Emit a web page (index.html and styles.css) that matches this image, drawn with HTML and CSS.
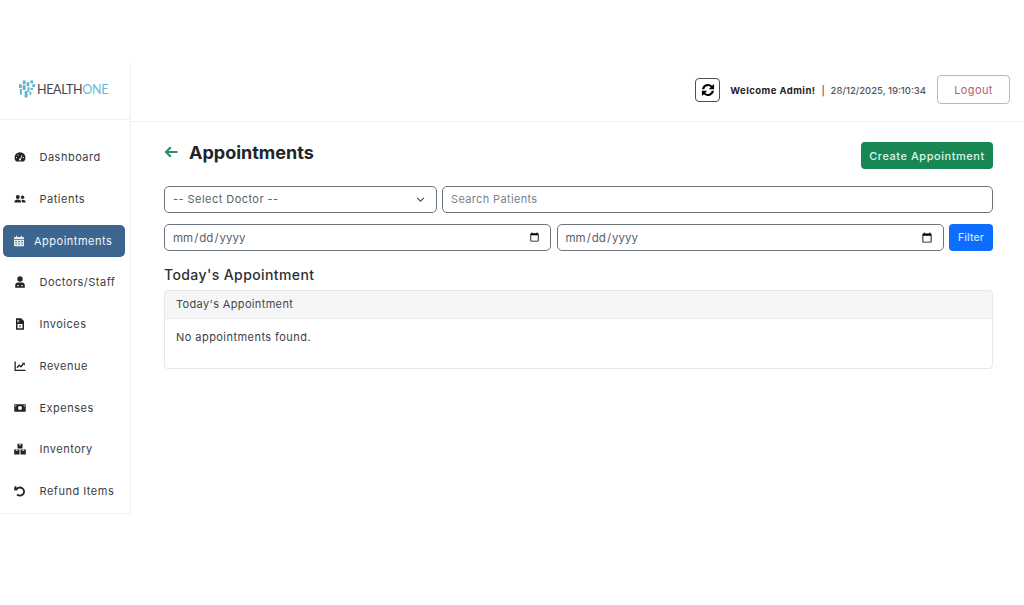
FILE: index.html
```html
<!DOCTYPE html>
<html lang="en">
<head>
<meta charset="utf-8">
<title>Appointments</title>
<link rel="stylesheet" href="styles.css">
</head>
<body>
<div class="app">
  <aside class="sidebar">
    <div class="brand">
      <svg class="brand-mark" viewBox="0 0 20 20" width="19" height="20">
        <g fill="#5db4d2">
          <rect x="1" y="5" width="3" height="4"/><rect x="5" y="1" width="3" height="4"/><rect x="5" y="6" width="3" height="5"/>
          <rect x="9" y="3" width="3" height="4"/><rect x="13" y="1" width="3" height="3"/><rect x="15" y="5" width="3" height="3"/>
          <rect x="10" y="8" width="2" height="5"/><rect x="2" y="10" width="2" height="6"/><rect x="7" y="12" width="3" height="7"/>
          <rect x="13" y="9" width="3" height="2"/><rect x="12" y="13" width="2" height="3"/>
        </g>
      </svg>
      <span class="brand-text"><span class="brand-dark">HEALTH</span><span class="brand-light">ONE</span></span>
    </div>
    <nav class="nav">
      <a class="nav-item"><svg class="ico" viewBox="0 0 12 12"><path d="M6 1.200A5.500 5.500 0 0 0 .5 6.700c0 1.300.4 2.400 1.200 3.400.2.200.4.300.7.300h7.200c.3 0 .5-.1.7-.3.8-1 1.200-2.100 1.200-3.400A5.500 5.500 0 0 0 6 1.200z"/><path d="M6.600 8.200 7.800 4.400" stroke="#fff" stroke-width=".9"/><circle cx="6" cy="8.400" r="1" fill="#fff"/><circle cx="2.600" cy="6.600" r=".6" fill="#fff"/><circle cx="4" cy="4" r=".6" fill="#fff"/><circle cx="9.400" cy="6.600" r=".6" fill="#fff"/></svg><span>Dashboard</span></a>
      <a class="nav-item"><svg class="ico" viewBox="0 0 12 12"><circle cx="3.800" cy="4" r="2"/><circle cx="8.600" cy="4.200" r="1.700"/><path d="M.3 9.600C.3 7.800 1.700 6.600 3.800 6.600s3.500 1.200 3.500 3z"/><path d="M8.200 9.600h3.500c0-1.800-1.200-2.800-3-2.800-.5 0-.9.100-1.300.2.500.7.800 1.600.8 2.600z"/></svg><span>Patients</span></a>
      <a class="nav-item active"><svg class="ico" viewBox="0 0 12 12"><path d="M3 .8h1V2h4V.8h1V2h1.300c.4 0 .7.300.7.700V4H1V2.700c0-.4.300-.7.700-.7H3z"/><path fill-rule="evenodd" d="M1 4.800h10v5.800c0 .4-.3.700-.7.700H1.700c-.4 0-.7-.3-.7-.7zM2.300 6v1.200h1.500V6zm3 0v1.200h1.500V6zm3 0v1.200h1.500V6zm-6 2.400v1.200h1.500V8.400zm3 0v1.200h1.500V8.400zm3 0v1.200h1.500V8.400z"/></svg><span>Appointments</span></a>
      <a class="nav-item"><svg class="ico" viewBox="0 0 12 12"><circle cx="6" cy="3" r="2.700"/><path fill-rule="evenodd" d="M1.200 11.700V9.200c0-1.500 1.200-2.700 2.700-2.700h4.200c1.500 0 2.700 1.200 2.700 2.700v2.500zM3.300 9.100v1.200h1.400V9.100zm4 0v1.200h1.400V9.100z"/></svg><span>Doctors/Staff</span></a>
      <a class="nav-item"><svg class="ico" viewBox="0 0 12 12"><path fill-rule="evenodd" d="M2 .3h5.200L10 3.100v8.600H2zM3.200 2v.8h2V2zm0 1.500v.8h2v-.8zM3.500 6v4.300h5V6z"/><path d="M5.500 7h1v2.300h-1z"/></svg><span>Invoices</span></a>
      <a class="nav-item"><svg class="ico" viewBox="0 0 12 12"><path d="M.5 1.500h1.300v8.200h9.700v1.300H.5z"/><path d="M3 7.700 5.200 5.200l1.800 1.500 2.200-2.700" fill="none" stroke="#212529" stroke-width="1.400"/><path d="M7.800 2.800h3v3z"/></svg><span>Revenue</span></a>
      <a class="nav-item"><svg class="ico" viewBox="0 0 12 12"><path fill-rule="evenodd" d="M.3 2.300h11.400v7.400H.3zM6 4a2 2 0 1 0 0 4 2 2 0 0 0 0-4z"/><path d="M1.200 3.200h1.300a1.300 1.300 0 0 1-1.300 1.300zM9.500 3.200h1.300v1.300a1.300 1.300 0 0 1-1.300-1.300z" fill="#fff"/></svg><span>Expenses</span></a>
      <a class="nav-item"><svg class="ico" viewBox="0 0 12 12"><path d="M3.500.7h5v4.900h-5zM.2 6.400h5.300v5H.2zM6.500 6.400h5.300v5H6.500z"/><path d="M5.400.7h1.200v1.700H5.400zM2.300 6.400h1.100v1.700H2.300zM8.600 6.400h1.100v1.700H8.600z" fill="#fff"/></svg><span>Inventory</span></a>
      <a class="nav-item"><svg class="ico" viewBox="0 0 12 12"><path d="M2.400 4.600A4.100 4.100 0 1 1 3.100 9.500" fill="none" stroke="#212529" stroke-width="1.800"/><path d="M.6 1.200h1.700l1 4.300-3.300-.2z"/></svg><span>Refund Items</span></a>
    </nav>
  </aside>
  <div class="main">
    <header class="topbar">
      <button class="refresh" type="button" aria-label="Refresh">
        <svg viewBox="0 0 12 12" width="14" height="14"><path d="M.9 5.300A5.100 5.100 0 0 1 9.500 2.300L11.200.9v4.400H6.800l1.600-1.800A3.500 3.500 0 0 0 2.700 5.300z"/><path d="M11.100 6.700A5.100 5.100 0 0 1 2.500 9.700L.8 11.100V6.700h4.400L3.600 8.500a3.500 3.500 0 0 0 5.700-1.800z"/></svg>
      </button>
      <span class="welcome">Welcome Admin!</span>
      <span class="sep">|</span>
      <span class="clock">28/12/2025, 19:10:34</span>
      <button class="logout" type="button">Logout</button>
    </header>
    <main class="content">
      <div class="title-row">
        <div class="title">
          <svg class="back" viewBox="0 0 14 12" width="14" height="12"><path d="M13.500 6H2.500M6.800 1.200 2 6l4.800 4.800" fill="none" stroke="#2c8f68" stroke-width="2.200"/></svg>
          <h1>Appointments</h1>
        </div>
        <button class="create" type="button">Create Appointment</button>
      </div>
      <div class="filters selects">
        <select class="field select-doctor"><option>-- Select Doctor --</option></select>
        <input class="field search" type="text" placeholder="Search Patients">
      </div>
      <div class="filters dates">
        <input class="field date" type="date">
        <input class="field date" type="date">
        <button class="filter" type="button">Filter</button>
      </div>
      <h2>Today's Appointment</h2>
      <section class="card">
        <div class="card-head">Today's Appointment</div>
        <div class="card-body">No appointments found.</div>
      </section>
    </main>
  </div>
</div>
</body>
</html>
```
FILE: styles.css
```css
* { box-sizing: border-box; }
html, body { margin: 0; height: 100%; background: #fff; }
body {
  font-family: "Inter", "Liberation Sans", sans-serif;
  color: #212529;
  overflow: hidden;
}
.app { display: flex; margin-top: 62px; height: 452px; }
.sidebar {
  width: 131px;
  flex: none;
  border-right: 1px solid #eef0f1;
  border-bottom: 1px solid #eef0f1;
  display: flex;
  flex-direction: column;
}
.brand {
  height: 58px;
  border-bottom: 1px solid #eef0f1;
  display: flex;
  align-items: center;
  justify-content: center;
  padding: 0 4px 3px 0;
}
.brand-text { font-family: "Lato", sans-serif; font-size: 12.500px; letter-spacing: -.35px; }
.brand-dark { color: #3c4652; }
.brand-light { color: #62bcd6; }
.nav { display: flex; flex-direction: column; gap: 10px; padding: 21.300px 5px 0 3px; }
.nav-item {
  height: 31.750px;
  display: flex;
  align-items: center;
  gap: 13.500px;
  padding-left: 11px;
  border-radius: 5px;
  font-size: 11px;
  color: #3a4046;
  letter-spacing: .5px;
}
.ico { width: 12px; height: 12px; fill: #212529; flex: none; }
.nav-item.active { background: #3c668f; color: #f2f6fa; gap: 9px; padding-left: 10px; }
.nav-item.active .ico { fill: #e8eef4; }
.main { flex: 1; min-width: 0; display: flex; flex-direction: column; }
.topbar {
  height: 60px;
  border-bottom: 1px solid #eef0f1;
  display: flex;
  align-items: center;
  padding: 0 14px 4px 0;
  justify-content: flex-end;
  font-size: 9.500px;
}
.refresh {
  width: 25px;
  height: 24px;
  padding: 0;
  margin-right: 10px;
  border: 1px solid #495057;
  border-radius: 4px;
  background: #fff;
  display: flex;
  align-items: center;
  justify-content: center;
}
.welcome { font-weight: 700; color: #1d2125; letter-spacing: .45px; margin-top: 1px; }
.sep { margin: 1px 6px 0; color: #212529; }
.clock { color: #50565c; font-weight: 500; margin-top: 1px; }
.logout {
  width: 73px;
  height: 29px;
  margin-left: 11px;
  border: 1px solid #dfa8ae;
  border-radius: 4px;
  background: #fff;
  color: #b9606a;
  font: 400 11px "Inter", sans-serif;
  letter-spacing: .4px;
}
.content { padding: 20px 31px 0 33px; }
.title-row { display: flex; justify-content: space-between; align-items: flex-start; height: 44px; }
.title { display: flex; align-items: center; gap: 11px; height: 20px; }
.back { flex: none; }
h1 { margin: 0; font-size: 18px; font-weight: 700; color: #212529; }
.create {
  width: 132px;
  height: 27px;
  border: 0;
  border-radius: 4px;
  background: #198754;
  color: #dff3e8;
  font: 500 11px "Inter", sans-serif;
  letter-spacing: .55px;
  padding-bottom: 1px;
}
.filters { display: flex; gap: 5.500px; height: 27px; margin-bottom: 11px; }
.selects { gap: 5px; }
.selects .field { padding-bottom: 2px; }
.field {
  height: 27px;
  border: 1px solid #6c757d;
  border-radius: 5px;
  background-color: #fff;
  font: 400 11px "Inter", sans-serif;
  color: #5a6168;
  padding: 0 8px;
  min-width: 0;
}
.field::placeholder { color: #7b8289; opacity: 1; }
.select-doctor {
  width: 273px;
  flex: none;
  appearance: none;
  letter-spacing: .45px;
  background-image: url("data:image/svg+xml,%3Csvg xmlns='http://www.w3.org/2000/svg' viewBox='0 0 16 16'%3E%3Cpath fill='none' stroke='%23495057' stroke-width='2' d='m2 5 6 6 6-6'/%3E%3C/svg%3E");
  background-repeat: no-repeat;
  background-position: right 11px center;
  background-size: 9px 9px;
}
.search { flex: 1; letter-spacing: .35px; }
.date { flex: 1; font-size: 11.500px; padding: 0 8px 0 7px; }
.filter {
  width: 44px;
  flex: none;
  height: 27px;
  border: 0;
  border-radius: 4px;
  background: #0d6efd;
  color: #cfe2ff;
  font: 500 10.500px "Inter", sans-serif;
  letter-spacing: .1px;
}
h2 { margin: 14px 0 6px; font-size: 14px; font-weight: 500; line-height: 19px; color: #2b3035; letter-spacing: .4px; }
.card { border: 1px solid #e6e8ea; border-radius: 4px; height: 79px; overflow: hidden; }
.card-head {
  height: 28px;
  background: #f6f6f6;
  border-bottom: 1px solid #e6e8ea;
  padding: 0 11px 1px;
  display: flex;
  align-items: center;
  font-size: 11px;
  color: #41474d;
  letter-spacing: .35px;
}
.card-body { padding: 10px 11px; font-size: 11px; line-height: 16px; color: #3a4046; letter-spacing: .45px; }
```
